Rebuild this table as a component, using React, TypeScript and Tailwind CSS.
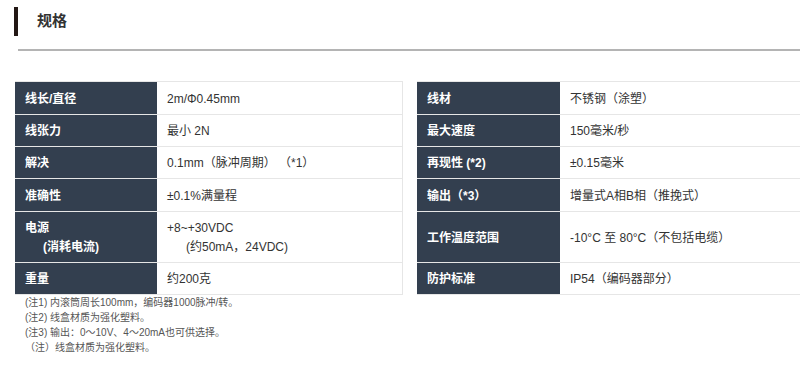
import React from "react";

type Row = { k: React.ReactNode; v: React.ReactNode; h: string };

const left: Row[] = [
  { k: "线长/直径", v: "2m/Φ0.45mm", h: "h-[33px]" },
  { k: "线张力", v: "最小 2N", h: "h-[32px]" },
  { k: "解决", v: "0.1mm（脉冲周期） （*1）", h: "h-[32px]" },
  { k: "准确性", v: "±0.1%满量程", h: "h-[33px]" },
  {
    k: (
      <div className="flex flex-col leading-[19px]">
        <span>电源</span>
        <span className="ml-[18px]">(消耗电流)</span>
      </div>
    ),
    v: (
      <div className="flex flex-col leading-[19px]">
        <span>+8~+30VDC</span>
        <span className="ml-[19px]">(约50mA，24VDC)</span>
      </div>
    ),
    h: "h-[51px]",
  },
  { k: "重量", v: "约200克", h: "h-[32px]" },
];

const right: Row[] = [
  { k: "线材", v: "不锈钢（涂塑）", h: "h-[33px]" },
  { k: "最大速度", v: "150毫米/秒", h: "h-[32px]" },
  { k: "再现性 (*2)", v: "±0.15毫米", h: "h-[32px]" },
  { k: "输出（*3）", v: "增量式A相B相（推挽式）", h: "h-[33px]" },
  { k: "工作温度范围", v: "-10°C 至 80°C（不包括电缆）", h: "h-[51px]" },
  { k: "防护标准", v: "IP54（编码器部分）", h: "h-[32px]" },
];

function Table({ rows, kw }: { rows: Row[]; kw: string }) {
  return (
    <div className="w-[388px] shrink-0 border-t border-r border-[#e6e6e6]">
      {rows.map((r, i) => (
        <div key={i} className={`flex ${r.h} border-b border-[#e6e6e6]`}>
          <div className={`${kw} shrink-0 bg-[#333f4f] text-white font-bold pl-[10px] pt-[1px] flex items-center text-[12px]`}>
            {r.k}
          </div>
          <div className="flex-1 pl-[10px] pt-[1px] flex items-center text-[12px] text-[#333333]">
            {r.v}
          </div>
        </div>
      ))}
    </div>
  );
}

export default function App() {
  return (
    <div
      className="w-[800px] h-[369px] overflow-hidden bg-white"
      style={{ fontFamily: '"Liberation Sans", "Noto Sans CJK SC", sans-serif' }}
    >
      <div className="flex items-center pt-[7px] pl-[14px]">
        <div className="w-[4px] h-[29px] bg-[#231815]" />
        <div className="ml-[19px] text-[15px] font-bold text-[#333333]">规格</div>
      </div>
      <div className="mt-[13px] ml-[18px] h-[2px] bg-[#b4b4b4]" />
      <div className="flex gap-[14px] pl-[15px] mt-[30px]">
        <Table rows={left} kw="w-[142px]" />
        <Table rows={right} kw="w-[143px]" />
      </div>
      <div className="pl-[25px] text-[10px] leading-[15px] text-[#555555]">
        <div>(注1) 内滚筒周长100mm，编码器1000脉冲/转。</div>
        <div>(注2) 线盒材质为强化塑料。</div>
        <div>(注3) 输出：0～10V、4～20mA也可供选择。</div>
        <div>（注）线盒材质为强化塑料。</div>
      </div>
    </div>
  );
}
